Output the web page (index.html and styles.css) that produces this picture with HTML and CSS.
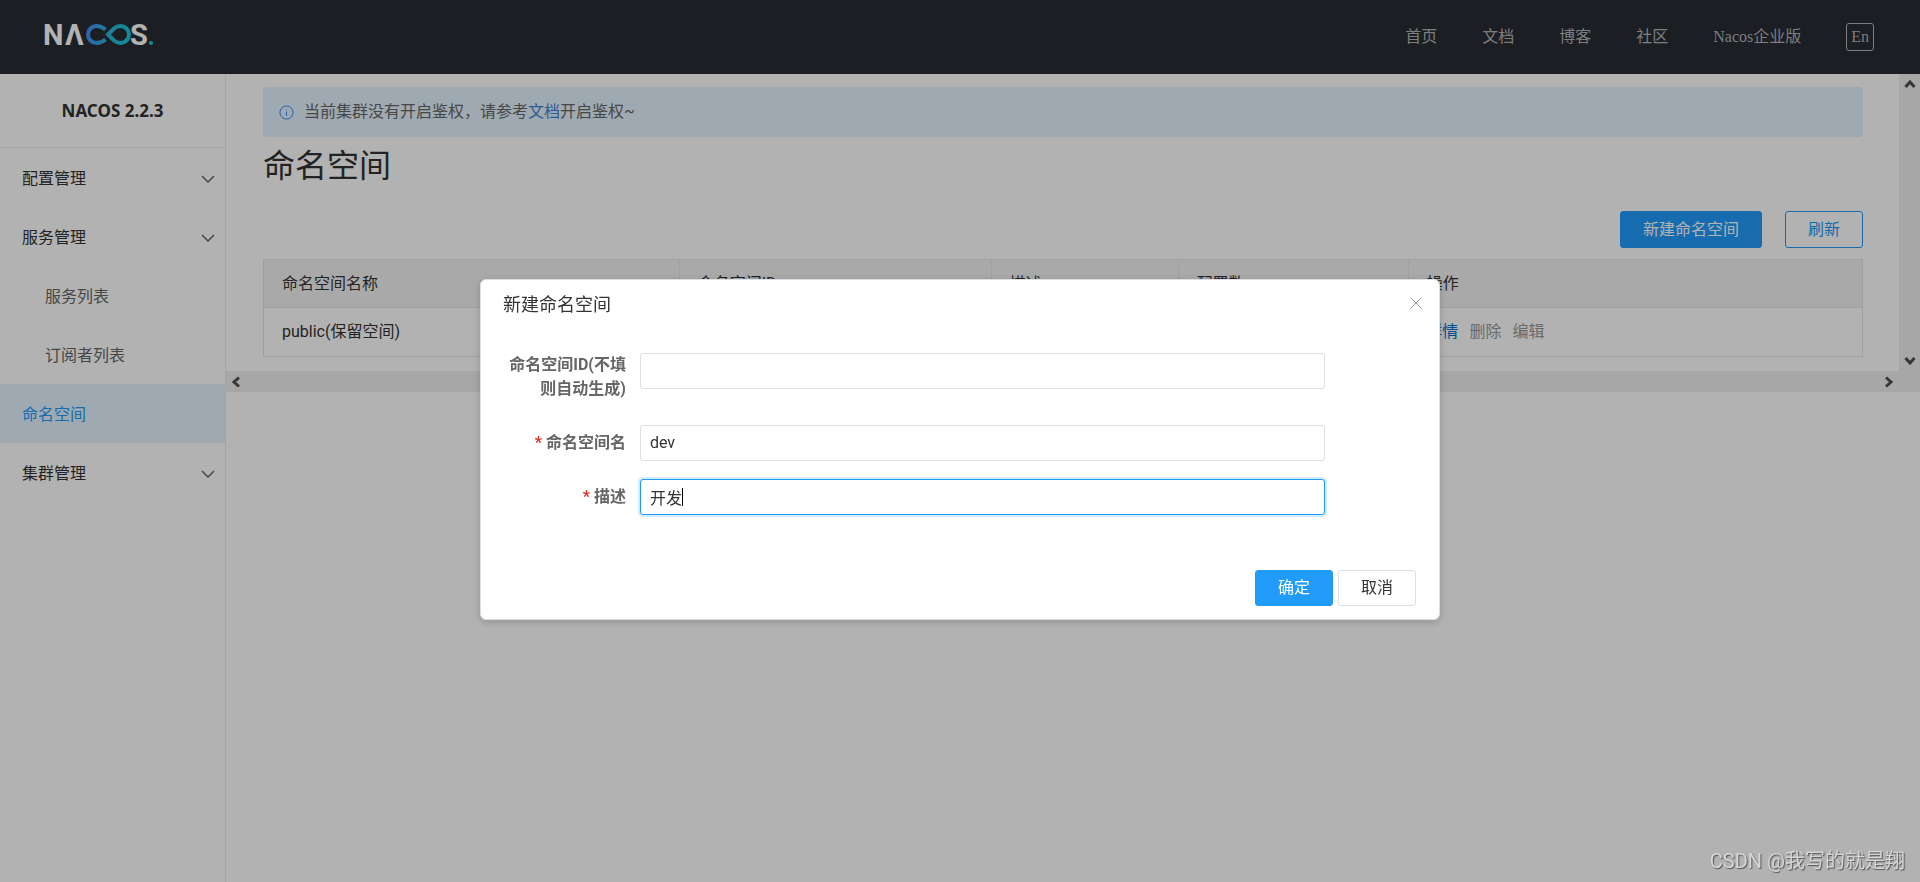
FILE: index.html
```html
<!DOCTYPE html>
<html lang="zh-CN">
<head>
<meta charset="utf-8">
<title>Nacos</title>
<link rel="stylesheet" href="styles.css">
</head>
<body>
<div class="app">
  <header class="topbar">
    <a class="logo" href="#" aria-label="Nacos">
      <svg width="118" height="40" viewBox="-4 -5 118 40">
        <defs>
          <linearGradient id="loop" gradientUnits="userSpaceOnUse" x1="41" y1="0" x2="86" y2="0">
            <stop offset="0" stop-color="#4190ff"/>
            <stop offset="0.5" stop-color="#2db5dc"/>
            <stop offset="1" stop-color="#12cddb"/>
          </linearGradient>
        </defs>
        <g class="logo-text">
          <text x="-2" y="23">N</text>
          <text x="20" y="23">Λ</text>
          <text x="85" y="23">S</text>
        </g>
        <path d="M60.500 7.500Q56 4 51.500 4A8.500 8.500 0 0 0 51.500 21Q56 21 60.500 17.500M63 12.500L69 6.500Q72 4 75.500 4A8.500 8.500 0 0 1 75.500 21Q72 21 69 18.500Z" fill="none" stroke="url(#loop)" stroke-width="4"/>
        <circle cx="106" cy="21" r="2" fill="#12cddb"/>
      </svg>
    </a>
    <nav class="topnav">
      <a href="#">首页</a>
      <a href="#">文档</a>
      <a href="#">博客</a>
      <a href="#">社区</a>
      <a href="#">Nacos企业版</a>
      <button class="lang" type="button">En</button>
    </nav>
  </header>

  <div class="body">
    <aside class="sidebar">
      <div class="version">NACOS 2.2.3</div>
      <nav class="menu">
        <a class="item" href="#">配置管理<svg class="chevron" viewBox="0 0 14 8"><path d="M1 1L7 7L13 1"/></svg></a>
        <a class="item" href="#">服务管理<svg class="chevron" viewBox="0 0 14 8"><path d="M1 1L7 7L13 1"/></svg></a>
        <a class="item sub" href="#">服务列表</a>
        <a class="item sub" href="#">订阅者列表</a>
        <a class="item active" href="#">命名空间</a>
        <a class="item" href="#">集群管理<svg class="chevron" viewBox="0 0 14 8"><path d="M1 1L7 7L13 1"/></svg></a>
      </nav>
    </aside>

    <div class="scroller">
      <main class="content">
        <div class="notice">
          <svg class="info" viewBox="0 0 16 16"><circle cx="8" cy="8" r="7"/><path d="M8 7V11.500M8 4.500V5.500"/></svg>
          <p>当前集群没有开启鉴权，请参考<a href="#">文档</a>开启鉴权~</p>
        </div>
        <h1>命名空间</h1>
        <div class="actions">
          <button class="btn primary" type="button">新建命名空间</button>
          <button class="btn outline" type="button">刷新</button>
        </div>
        <table class="grid">
          <colgroup><col class="c-name"><col class="c-id"><col class="c-desc"><col class="c-count"><col></colgroup>
          <thead>
            <tr><th>命名空间名称</th><th>命名空间ID</th><th>描述</th><th>配置数</th><th>操作</th></tr>
          </thead>
          <tbody>
            <tr>
              <td>public(保留空间)</td><td></td><td></td><td></td>
              <td><div class="ops"><a href="#">详情</a><span>删除</span><span>编辑</span></div></td>
            </tr>
          </tbody>
        </table>
      </main>
      <div class="bar vertical">
        <svg viewBox="0 0 12 10"><path d="M1.500 8L6 3L10.500 8"/></svg>
        <svg viewBox="0 0 12 10"><path d="M1.500 2L6 7L10.500 2"/></svg>
      </div>
      <div class="bar horizontal">
        <svg viewBox="0 0 10 12"><path d="M8 1.500L3 6L8 10.500"/></svg>
        <svg viewBox="0 0 10 12"><path d="M2 1.500L7 6L2 10.500"/></svg>
      </div>
    </div>
  </div>
</div>

<div class="overlay">
  <form class="dialog" role="dialog" aria-labelledby="dialog-title">
    <div class="dialog-head">
      <h2 id="dialog-title">新建命名空间</h2>
      <button class="close" type="button" aria-label="关闭"><svg viewBox="0 0 12 12"><path d="M0.500 0.500L11.500 11.500M11.500 0.500L0.500 11.500"/></svg></button>
    </div>
    <div class="field tall">
      <label for="ns-id">命名空间ID(不填则自动生成)</label>
      <input id="ns-id" type="text">
    </div>
    <div class="field">
      <label class="required" for="ns-name">命名空间名</label>
      <input id="ns-name" type="text" value="dev">
    </div>
    <div class="field">
      <label class="required" for="ns-desc">描述</label>
      <div class="control">
        <input class="focused" id="ns-desc" type="text" value="开发">
        <span class="caret"></span>
      </div>
    </div>
    <div class="dialog-foot">
      <button class="btn primary" type="button">确定</button>
      <button class="btn normal" type="button">取消</button>
    </div>
  </form>
</div>
<div class="watermark">CSDN @我写的就是翔</div>
</body>
</html>
```

FILE: styles.css
```css
* { box-sizing: border-box; }
body {
  margin: 0;
  font: 16px/24px Roboto, "Noto Sans CJK SC", sans-serif;
  color: #333;
  background: #fff;
}
a { color: inherit; text-decoration: none; }
h1, h2, p { margin: 0; font-weight: 400; }
button, input { font: inherit; }

.app { min-height: 100vh; display: flex; flex-direction: column; }
.topbar {
  height: 74px;
  padding: 0 46px 0 41px;
  display: flex;
  align-items: center;
  justify-content: space-between;
  background: #272b32;
}
.logo, .logo svg { display: block; }
.logo-text { font: 700 29px Roboto, sans-serif; fill: #fff; }
.topnav {
  display: flex;
  align-items: center;
  gap: 45px;
  font-family: "Liberation Serif", "Noto Sans CJK SC", serif;
  color: #b3b5b7;
}
.lang {
  height: 28px;
  padding: 0 4px;
  border: 1px solid #b3b5b7;
  border-radius: 3px;
  background: none;
  color: inherit;
  line-height: 24px;
}

.body { flex: 1; display: flex; }
.sidebar { width: 226px; border-right: 1px solid #ebebeb; }
.version {
  height: 74px;
  border-bottom: 1px solid #ebebeb;
  font: 700 17px/74px "Noto Sans", sans-serif;
  text-align: center;
}
.item {
  height: 59px;
  padding: 2px 10px 0 22px;
  display: flex;
  align-items: center;
  justify-content: space-between;
}
.sub { padding-left: 45px; color: #666; }
.active { background: #e4f3fe; color: #209bfa; }
.chevron { width: 14px; height: 8px; fill: none; stroke: #666; stroke-width: 1.5; }

.scroller {
  flex: 1;
  align-self: flex-start;
  display: grid;
  grid-template-columns: 1fr 21px;
}
.content { padding: 13px 36px 14px 37px; }
.notice {
  height: 50px;
  padding: 0 16px;
  display: flex;
  align-items: center;
  gap: 10px;
  border-radius: 3px;
  background: #e4f3fe;
  color: #666;
}
.notice a { color: #4183d9; }
.info { width: 15px; height: 15px; fill: none; stroke: #2e83f5; stroke-width: 1; }
h1 { font-size: 32px; line-height: 58px; }
.actions { display: flex; justify-content: flex-end; gap: 23px; padding: 16px 0 11px; }
.btn {
  height: 37px;
  padding: 0 22px;
  border: 1px solid #209bfa;
  border-radius: 3px;
  line-height: 24px;
}
.primary { background: #209bfa; color: #fff; }
.outline { background: #fff; color: #209bfa; }
.normal { background: #fff; color: #333; border-color: #dcdee3; }

.grid { width: 100%; table-layout: fixed; border-collapse: collapse; border: 1px solid #e6e6e6; }
.grid th, .grid td { padding: 12px 18px; height: 49px; text-align: left; font-weight: 400; }
.grid th { height: 48px; padding: 11px 18px; background: #f3f3f3; border: 1px solid #e6e6e6; }
.c-name { width: 26%; }
.c-id { width: 19.5%; }
.c-desc { width: 11.7%; }
.c-count { width: 14.4%; }
.ops { display: flex; gap: 11px; color: #999; }
.ops a { color: #0070cc; }

.bar { display: flex; justify-content: space-between; align-items: center; background: #efefef; }
.bar svg { fill: none; stroke: #505050; stroke-width: 3; }
.vertical { flex-direction: column; padding: 5px 0; }
.vertical svg { width: 12px; height: 10px; }
.horizontal { grid-column: 1 / -1; height: 21px; padding: 0 26px 0 5px; }
.horizontal svg { width: 10px; height: 12px; }

.overlay {
  position: fixed;
  inset: 0;
  display: flex;
  justify-content: center;
  align-items: flex-start;
  padding-top: 279px;
  background: rgba(0, 0, 0, 0.3);
}
.dialog {
  width: 50%;
  padding: 0 23px 13px 22px;
  border: 1px solid #dcdee3;
  border-radius: 6px;
  background: #fff;
  box-shadow: 0 2px 8px rgba(0, 0, 0, 0.2);
}
.dialog-head { display: flex; justify-content: space-between; margin-right: -6px; padding: 13px 0 36px; }
h2 { font-size: 18px; line-height: 24px; }
.close { width: 12px; height: 20px; padding: 0; border: 0; background: none; }
.close svg { display: block; width: 12px; height: 12px; fill: none; stroke: #999; }
.field { display: flex; align-items: flex-start; margin-bottom: 18px; }
.field label {
  width: 15%;
  padding: 6px 14px 0 0;
  text-align: right;
  font-weight: 700;
  color: #666;
}
.field.tall label { padding-top: 0; }
.tall { min-height: 54px; }
.required::before { content: "*"; margin-right: 4px; color: #d93026; }
.field input {
  width: 75%;
  height: 36px;
  padding: 0 9px 1px;
  border: 1px solid #dcdee3;
  border-radius: 3px;
  background: #fff;
  color: #333;
  outline: 0;
}
.control { position: relative; width: 75%; }
.field .control input { width: 100%; display: block; }
.field .focused { border-color: #209bfa; box-shadow: 0 0 0 2px rgba(32, 155, 250, 0.2); }
.caret { position: absolute; left: 42px; top: 9px; width: 1px; height: 18px; background: #000; }
.dialog-foot { display: flex; justify-content: flex-end; gap: 5px; padding-top: 37px; }
.dialog-foot .btn { height: 36px; }

.watermark {
  position: fixed;
  right: 15px;
  bottom: 6px;
  font-size: 20px;
  line-height: 30px;
  color: #d6d6d6;
  text-shadow: 1px 1px 1px #555;
}
```
